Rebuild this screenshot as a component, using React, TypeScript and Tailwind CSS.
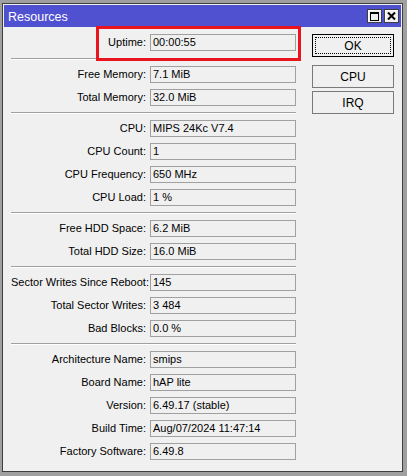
import React from "react";

const groups: [string, string][][] = [
  [["Uptime", "00:00:55"]],
  [
    ["Free Memory", "7.1 MiB"],
    ["Total Memory", "32.0 MiB"],
  ],
  [
    ["CPU", "MIPS 24Kc V7.4"],
    ["CPU Count", "1"],
    ["CPU Frequency", "650 MHz"],
    ["CPU Load", "1 %"],
  ],
  [
    ["Free HDD Space", "6.2 MiB"],
    ["Total HDD Size", "16.0 MiB"],
  ],
  [
    ["Sector Writes Since Reboot", "145"],
    ["Total Sector Writes", "3 484"],
    ["Bad Blocks", "0.0 %"],
  ],
  [
    ["Architecture Name", "smips"],
    ["Board Name", "hAP lite"],
    ["Version", "6.49.17 (stable)"],
    ["Build Time", "Aug/07/2024 11:47:14"],
    ["Factory Software", "6.49.8"],
  ],
];

function Row({ label, value }: { label: string; value: string }) {
  return (
    <div className="flex items-center h-[17px] gap-[4px]">
      <div className="w-[135px] text-right leading-[17px] whitespace-nowrap">{label}:</div>
      <div className="w-[146px] h-[17px] border border-[#a0a0a0] pl-[2px] leading-[15px] whitespace-nowrap">
        {value}
      </div>
    </div>
  );
}

function CaptionButton({ children }: { children: React.ReactNode }) {
  return (
    <div className="w-[15px] h-[14px] bg-[#f0f0f0] border border-[#404040] shadow-[inset_1px_1px_#ffffff] flex items-center justify-center">
      {children}
    </div>
  );
}

export default function App() {
  return (
    <div
      className="relative w-[407px] h-[476px] bg-[#a0a0a0] pt-[3px] pl-[2px] text-[11px] text-black"
      style={{ fontFamily: '"Liberation Sans", Arial, sans-serif' }}
    >
      <div className="w-[401px] h-[469px] border border-[#404040] bg-[#f0f0f0] p-px flex flex-col">
        {/* title bar */}
        <div className="h-[22px] bg-[#5051d0] flex items-center justify-between pl-[4px] pr-[2px]">
          <span className="text-white text-[12.5px] mt-[3px]">Resources</span>
          <div className="flex gap-[2px]">
            <CaptionButton>
              <svg width="9" height="9" viewBox="0 0 9 9">
                <rect x="0.5" y="0.5" width="8" height="8" fill="none" stroke="#000" />
                <rect x="0" y="0" width="9" height="2" fill="#000" />
              </svg>
            </CaptionButton>
            <CaptionButton>
              <svg width="9" height="8" viewBox="0 0 9 8">
                <path d="M1 0.5 L8 7.5 M8 0.5 L1 7.5" stroke="#000" strokeWidth="2" />
              </svg>
            </CaptionButton>
          </div>
        </div>

        {/* body */}
        <div className="flex flex-1">
          <div className="ml-[7px] w-[285px] pt-[7px] flex flex-col">
            {groups.map((g, gi) => (
              <div key={gi} className="flex flex-col">
                {gi > 0 && (
                  <div
                    className={`${gi === 1 ? "mt-[7px]" : "mt-[6px]"} mb-[6px] h-[2px] border-t border-[#a0a0a0] border-b border-b-white`}
                  />
                )}
                <div className="flex flex-col gap-[6px]">
                  {g.map(([l, v]) => (
                    <Row key={l} label={l} value={v} />
                  ))}
                </div>
              </div>
            ))}
          </div>

          <div className="ml-[16px] w-[82px] pt-[7px] flex flex-col">
            <div className="relative h-[23px] border border-black flex items-center justify-center text-[12px]">
              <div className="absolute inset-[2px] border border-dotted border-black" />
              OK
            </div>
            <div className="mt-[8px] h-[23px] border border-[#7a7a7a] flex items-center justify-center text-[12px]">
              CPU
            </div>
            <div className="mt-[3px] h-[23px] border border-[#7a7a7a] flex items-center justify-center text-[12px]">
              IRQ
            </div>
          </div>
        </div>
      </div>

      {/* highlight annotation */}
      <div className="absolute left-[96px] top-[26px] w-[205px] h-[35px] border-[3px] border-[#e8141e]" />
    </div>
  );
}
